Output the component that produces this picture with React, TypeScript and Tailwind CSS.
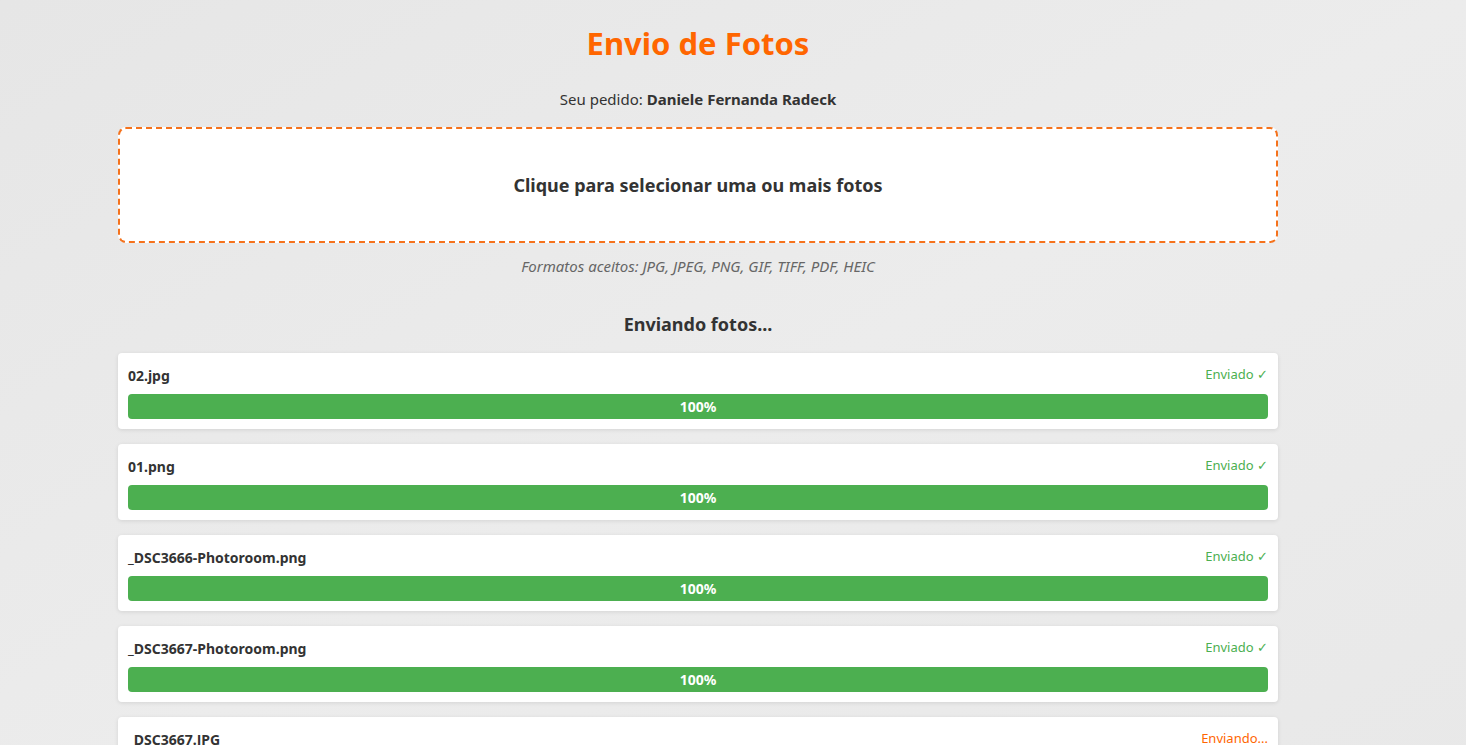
type Upload = {
  name: string
  progress: number
  done: boolean
}

const uploads: Upload[] = [
  { name: '02.jpg', progress: 100, done: true },
  { name: '01.png', progress: 100, done: true },
  { name: '_DSC3666-Photoroom.png', progress: 100, done: true },
  { name: '_DSC3667-Photoroom.png', progress: 100, done: true },
  { name: '_DSC3667.JPG', progress: 40, done: false },
]

// ─── Upload row ───────────────────────────────────────────────────────────────
function UploadItem({ name, progress, done }: Upload) {
  return (
    <div className="bg-white rounded-[4px] p-[10px] shadow-[0_1px_4px_rgba(0,0,0,0.1)]">
      <div className="h-[24px] mb-[7px] flex items-center justify-between">
        <span className="text-[14px] font-bold text-[#333]">{name}</span>
        {done ? (
          <span className="text-[13px] text-[#4caf50]">Enviado ✓</span>
        ) : (
          <span className="text-[13px] text-[#ff6600]">Enviando...</span>
        )}
      </div>
      <div className="h-[25px] rounded-[4px] bg-[#e0e0e0] overflow-hidden">
        <div
          className="h-full bg-[#4caf50] flex items-center justify-center text-white text-[14px] font-bold"
          style={{ width: `${progress}%` }}
        >
          {progress}%
        </div>
      </div>
    </div>
  )
}

// ─── Page ─────────────────────────────────────────────────────────────────────
export default function App() {
  return (
    <div
      className="min-h-screen bg-gradient-to-br from-[#e6e6e6] via-[#ececec] to-[#e8e8e8] pl-[118px] pt-[22px] pb-10"
      style={{ fontFamily: '"Noto Sans", "Open Sans", sans-serif' }}
    >
      <div className="w-[1160px]">
        <h1 className="text-center text-[31px] font-bold text-[#ff6600] leading-[42px]">
          Envio de Fotos
        </h1>
        <p className="text-center text-[15px] text-[#333] mt-[24px] leading-[22px]">
          Seu pedido: <strong>Daniele Fernanda Radeck</strong>
        </p>

        {/* Drop zone */}
        <div className="mt-[17px] h-[116px] bg-white border-2 border-dashed border-[#f5721c] rounded-[8px] flex items-center justify-center">
          <span className="text-[18px] font-bold text-[#333]">Clique para selecionar uma ou mais fotos</span>
        </div>
        <p className="text-center text-[15px] italic text-[#666] mt-[13px] leading-[20px]">
          Formatos aceitos: JPG, JPEG, PNG, GIF, TIFF, PDF, HEIC
        </p>

        <h2 className="text-center text-[18px] font-bold text-[#333] mt-[36px] leading-[24px]">
          Enviando fotos...
        </h2>

        <div className="mt-[17px] flex flex-col gap-[15px]">
          {uploads.map((u) => (
            <UploadItem key={u.name} {...u} />
          ))}
        </div>
      </div>
    </div>
  )
}
